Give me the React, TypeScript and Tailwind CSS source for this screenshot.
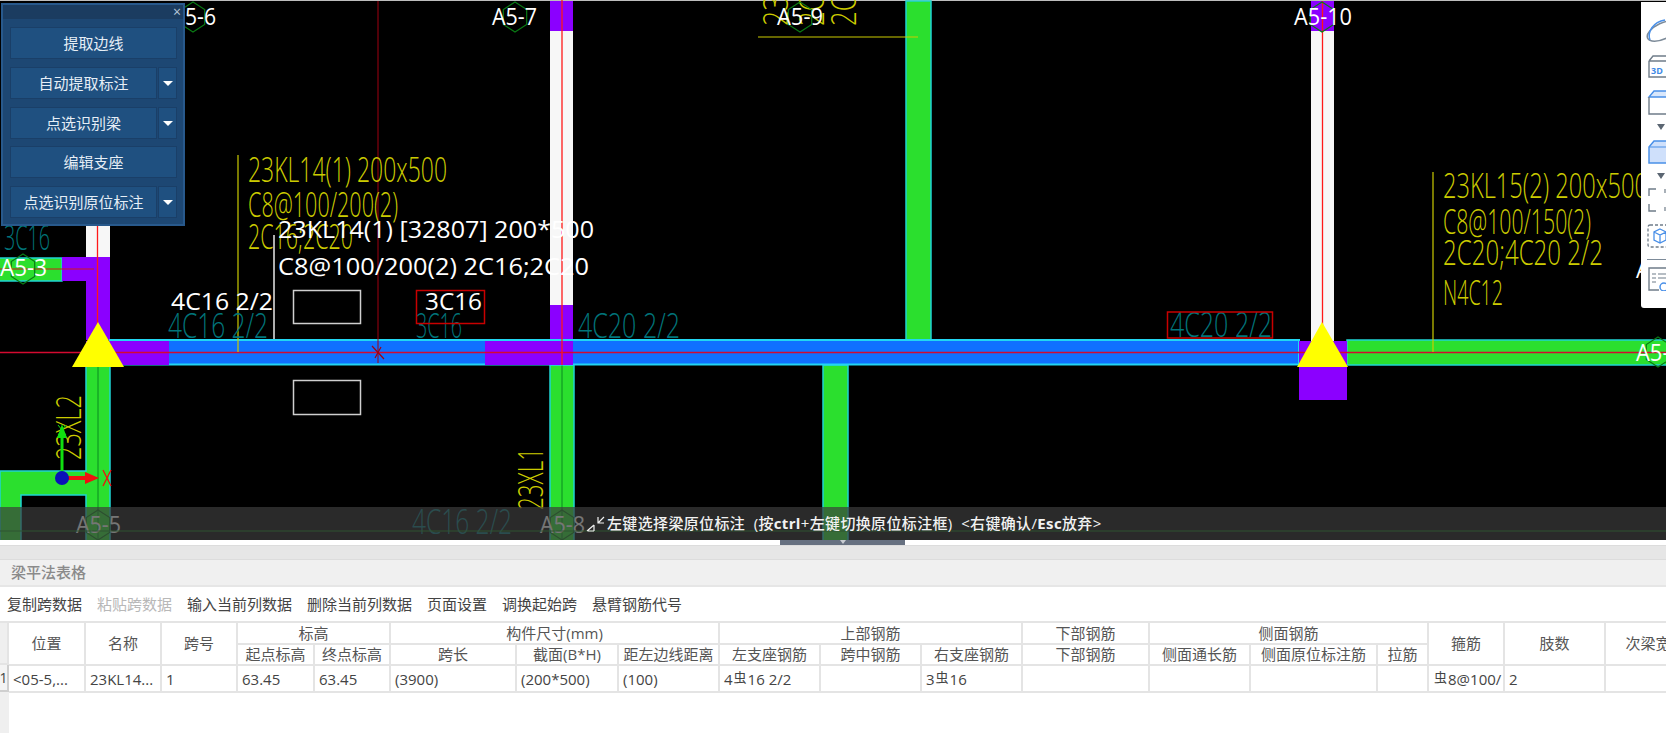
import type { ReactNode } from "react";

const YELLOW = "#cccc00";
const TEAL = "#00747a";
const GREEN = "#2bdf2e";
const CYAN = "#1fd3d3";
const BLUE = "#1070ff";
const PURPLE = "#8b00ff";
const COLUMN_WHITE = "#f7f7f7";
const CAD_FONT = "'Open Sans', sans-serif";

function CadText({ x, y, w, size = 34, color = YELLOW, rotate = false, weight = 300, children }: {
  x: number; y: number; w: number; size?: number; color?: string; rotate?: boolean; weight?: number; children: string;
}) {
  return (
    <text
      x={x}
      y={y}
      fontSize={size}
      fontWeight={weight}
      fontFamily={CAD_FONT}
      fill={color}
      textLength={w}
      lengthAdjust="spacingAndGlyphs"
      transform={rotate ? `rotate(-90 ${x} ${y})` : undefined}
    >
      {children}
    </text>
  );
}

function Hex({ cx, cy }: { cx: number; cy: number }) {
  const r = 15;
  const pts = [0, 60, 120, 180, 240, 300]
    .map((a) => {
      const t = (a * Math.PI) / 180;
      return `${cx + r * 0.9 * Math.sin(t)},${cy - r * Math.cos(t)}`;
    })
    .join(" ");
  return <polygon points={pts} fill="none" stroke="#0a7a14" strokeWidth="1.2" />;
}

function Member({ x, y, w, h, fill = GREEN, edge = CYAN }: { x: number; y: number; w: number; h: number; fill?: string; edge?: string }) {
  return <rect x={x} y={y} width={w} height={h} fill={fill} stroke={edge} strokeWidth="1.5" />;
}

function Block({ x, y, w, h, fill }: { x: number; y: number; w: number; h: number; fill: string }) {
  return <rect x={x} y={y} width={w} height={h} fill={fill} />;
}

function Label({ x, y, w, children }: { x: number; y: number; w: number; children: string }) {
  return <CadText x={x} y={y} w={w} size={23} color="#ffffff" weight={400}>{children}</CadText>;
}

function Drawing() {
  return (
    <svg className="absolute inset-0" width="1666" height="540" viewBox="0 0 1666 540">
      <line x1="0" y1="0.5" x2="1666" y2="0.5" stroke="#bdbdbd" />

      {/* green members */}
      <path d="M0 471H86V365H110V541H86V495H21V541H0Z" fill={GREEN} stroke={CYAN} strokeWidth="1.5" />
      <Member x={-2} y={258} w={64} h={23} />
      <Member x={550} y={365} w={24} h={176} />
      <Member x={823} y={365} w={25} h={176} />
      <Member x={906} y={1} w={25} h={339} />
      <Member x={1347} y={340} w={320} h={25} />
      <line x1="98" y1="365" x2="98" y2="540" stroke="#0a8a20" />
      <line x1="562" y1="365" x2="562" y2="540" stroke="#0a8a20" />

      {/* columns */}
      <Block x={86} y={226} w={24} h={32} fill={COLUMN_WHITE} />
      <Block x={550} y={31} w={23} h={275} fill={COLUMN_WHITE} />
      <Block x={1311} y={31} w={23} h={310} fill={COLUMN_WHITE} />
      <Block x={550} y={1} w={23} h={30} fill={PURPLE} />
      <Block x={1311} y={1} w={23} h={30} fill={PURPLE} />
      <path d="M62 257H110V340H86V281H62Z" fill={PURPLE} />
      <Block x={550} y={305} w={23} h={36} fill={PURPLE} />

      {/* beam */}
      <rect x={110} y={340} width={1189} height={24.5} fill={BLUE} stroke="#22d6f2" strokeWidth="2" />
      <Block x={86} y={341} w={83} h={24} fill={PURPLE} />
      <Block x={485} y={341} w={88} h={24} fill={PURPLE} />
      <Block x={1299} y={341} w={48} h={59} fill={PURPLE} />

      {/* axis and leader lines */}
      <line x1="0" y1="352.5" x2="1666" y2="352.5" stroke="#d40a30" strokeWidth="1.5" />
      <line x1="0" y1="269" x2="94" y2="269" stroke="#d01818" strokeWidth="1.2" />
      <line x1="97.5" y1="226" x2="97.5" y2="340" stroke="#ff1818" strokeWidth="1.3" />
      <line x1="562" y1="0" x2="562" y2="365" stroke="#ff1818" strokeWidth="1.3" />
      <line x1="1322.5" y1="1" x2="1322.5" y2="330" stroke="#ff1818" strokeWidth="1.3" />
      <line x1="378" y1="1" x2="378" y2="363" stroke="#a00010" />
      <path d="M372 346L384 359M375 358L381 347" stroke="#a00010" strokeWidth="1.2" />
      <line x1="238" y1="155" x2="238" y2="352" stroke={YELLOW} strokeWidth="1.2" />
      <line x1="1433" y1="172" x2="1433" y2="352" stroke={YELLOW} strokeWidth="1.2" />
      <line x1="758" y1="37" x2="918" y2="37" stroke={YELLOW} strokeWidth="1.2" />
      <line x1="274" y1="235" x2="274" y2="339" stroke="#e8e8e8" strokeWidth="1.5" />

      {/* supports */}
      <polygon points="98,322 124,367 72,367" fill="#ffff00" />
      <polygon points="1322,322 1348,367 1297,367" fill="#ffff00" />

      {/* beam text in yellow */}
      <CadText x={248} y={182} w={199}>23KL14(1)  200x500</CadText>
      <CadText x={248} y={217} w={150}>C8@100/200(2)</CadText>
      <CadText x={248} y={249} w={105}>2C16;2C20</CadText>
      <CadText x={1443} y={198} w={205}>23KL15(2)  200x500</CadText>
      <CadText x={1443} y={234} w={148}>C8@100/150(2)</CadText>
      <CadText x={1443} y={265} w={160}>2C20;4C20 2/2</CadText>
      <CadText x={1443} y={305} w={60}>N4C12</CadText>
      <CadText x={81} y={460} w={65} rotate>23XL2</CadText>
      <CadText x={543} y={510} w={62} rotate>23XL1</CadText>
      <CadText x={788} y={26} w={60} rotate>23KL</CadText>
      <CadText x={824} y={26} w={60} rotate>2C16</CadText>
      <CadText x={856} y={26} w={60} rotate>2C20</CadText>

      {/* rebar marks in teal */}
      <CadText x={4} y={250} w={46} color={TEAL}>3C16</CadText>
      <CadText x={168} y={338} w={100} color={TEAL}>4C16 2/2</CadText>
      <CadText x={416} y={338} w={46} color={TEAL}>3C16</CadText>
      <CadText x={578} y={338} w={102} color={TEAL}>4C20 2/2</CadText>
      <CadText x={1170} y={337} w={102} color={TEAL}>4C20 2/2</CadText>
      <CadText x={412} y={534} w={100} color={TEAL}>4C16 2/2</CadText>

      {/* picked rectangles */}
      <rect x={293.5} y={290.5} width={67} height={33} fill="none" stroke="#cfcfcf" strokeWidth="1.5" />
      <rect x={293.5} y={380.5} width={67} height={34} fill="none" stroke="#cfcfcf" strokeWidth="1.5" />
      <rect x={416.5} y={290.5} width={68} height={33} fill="none" stroke="#c80000" strokeWidth="1.5" />
      <rect x={1167.5} y={312} width={105} height={26} fill="none" stroke="#c80000" strokeWidth="1.5" />

      {/* axis marks */}
      <Hex cx={23} cy={269} />
      <Hex cx={193} cy={17} />
      <Hex cx={515} cy={17} />
      <Hex cx={800} cy={17} />
      <Hex cx={1322} cy={17} />
      <Hex cx={1658} cy={352} />
      <Hex cx={98} cy={525} />
      <Hex cx={562} cy={525} />
      <Label x={0} y={276} w={47}>A5-3</Label>
      <Label x={185} y={25} w={31}>5-6</Label>
      <Label x={492} y={25} w={45}>A5-7</Label>
      <Label x={777} y={25} w={46}>A5-9</Label>
      <Label x={1294} y={25} w={58}>A5-10</Label>
      <Label x={1636} y={361} w={46}>A5-1</Label>
      <Label x={1636} y={278} w={46}>A5-2</Label>
      <Label x={76} y={533} w={45}>A5-5</Label>
      <Label x={540} y={533} w={45}>A5-8</Label>
      <line x1="0" y1="531" x2="1666" y2="531" stroke="#0f8a1a" />

      {/* hovered beam tip */}
      <Label x={278} y={238} w={316}>23KL14(1) [32807] 200*500</Label>
      <Label x={278} y={275} w={311}>C8@100/200(2) 2C16;2C20</Label>
      <Label x={171} y={310} w={102}>4C16 2/2</Label>
      <Label x={425} y={310} w={57}>3C16</Label>

      {/* coordinate mark */}
      <path d="M62 478V436" stroke="#10e010" strokeWidth="3" />
      <polygon points="62,424 57,438 67,438" fill="#10e010" />
      <path d="M58 425L66 435M66 425L58 435" stroke="#10e010" strokeWidth="1" />
      <path d="M62 478H86" stroke="#f01010" strokeWidth="4" />
      <polygon points="99,478 85,472 85,484" fill="#f01010" />
      <path d="M103 470L111 486M111 470L103 486" stroke="#f01010" strokeWidth="1.3" />
      <circle cx="62" cy="478" r="7" fill="#0a10b8" />
    </svg>
  );
}

function PanelButton({ label, split = false, className = "" }: { label: string; split?: boolean; className?: string }) {
  return (
    <div className={`flex h-[32px] gap-px ${className}`}>
      <div className="flex flex-1 items-center justify-center border border-[#1a3f68] bg-[#1f5080] text-[15px] text-[#e6eef6]">
        {label}
      </div>
      {split && (
        <div className="flex w-[19px] items-center justify-center border border-[#1a3f68] bg-[#1f5080]">
          <div className="h-0 w-0 border-x-[5px] border-t-[5px] border-x-transparent border-t-white" />
        </div>
      )}
    </div>
  );
}

function FloatPanel() {
  return (
    <div className="absolute left-[1px] top-[3px] flex h-[223px] w-[184px] flex-col border-2 border-[#28598c] bg-[#1d4773]">
      <div className="flex h-[14px] shrink-0 items-center justify-end bg-[#1b3c60] pr-[2px] text-[14px] leading-none text-[#b8c8d8]">×</div>
      <div className="flex flex-col gap-[8px] pl-[7px] pr-[6px] pt-[8px]">
        <PanelButton label="提取边线" />
        <PanelButton label="自动提取标注" split />
        <PanelButton label="点选识别梁" split />
        <PanelButton label="编辑支座" className="-mt-px" />
        <PanelButton label="点选识别原位标注" split />
      </div>
    </div>
  );
}

function Icon({ h, className = "", children }: { h: number; className?: string; children: ReactNode }) {
  return (
    <svg width="25" height={h} viewBox={`0 0 25 ${h}`} className={`shrink-0 ${className}`} fill="none">
      {children}
    </svg>
  );
}

function Drop({ className }: { className: string }) {
  return <div className={`ml-[16px] h-0 w-0 shrink-0 border-x-[4px] border-t-[6px] border-x-transparent border-t-[#5b6672] ${className}`} />;
}

function SideToolbar() {
  return (
    <div className="absolute right-0 top-[2px] flex h-[306px] w-[25px] flex-col overflow-hidden rounded-bl-[3px] bg-white pt-[16px]">
      <Icon h={27}>
        <ellipse cx="22" cy="13" rx="17" ry="8" transform="rotate(-25 22 13)" stroke="#7d8b99" strokeWidth="1.5" />
        <path d="M9 22C6 14 12 4 24 2" stroke="#4a90e8" strokeWidth="1.5" />
      </Icon>
      <Icon h={23} className="mt-[10px]">
        <path d="M8 6L12 1H26M8 6H26M8 6V22H26" stroke="#6f7c89" strokeWidth="1.4" />
        <text x="10" y="19" fontSize="9" fontWeight="700" fontFamily={CAD_FONT} fill="#3f8ae6">3D</text>
      </Icon>
      <Icon h={25} className="mt-[12px]">
        <path d="M8 7L13 1H26V7Z" fill="#d9e7fb" stroke="#4a90e8" strokeWidth="1.4" />
        <path d="M8 7V24H26" stroke="#6f7c89" strokeWidth="1.4" />
      </Icon>
      <Drop className="mt-[9px]" />
      <Icon h={24} className="mt-[10px]">
        <path d="M8 7L13 1H26V23H8Z" fill="#cfe0fb" stroke="#4a90e8" strokeWidth="1.5" />
        <path d="M8 7H26" stroke="#4a90e8" strokeWidth="1.2" />
      </Icon>
      <Drop className="mt-[9px]" />
      <Icon h={24} className="mt-[9px]">
        <path d="M15 1H8V8M8 16V23H15" stroke="#6f7c89" strokeWidth="1.4" />
        <path d="M24 1V5M24 19V23" stroke="#6f7c89" strokeWidth="1.2" />
      </Icon>
      <Icon h={24} className="mt-[12px]">
        <rect x="7" y="1" width="24" height="22" rx="2" stroke="#6f7c89" strokeWidth="1.3" strokeDasharray="3 2" />
        <path d="M19 5L25 8V16L19 19L13 16V8ZM13 8L19 11L25 8M19 11V19" stroke="#4a90e8" strokeWidth="1.3" />
      </Icon>
      <div className="ml-[6px] mt-[11px] h-px w-[19px] shrink-0 bg-[#7d8b99]" />
      <Icon h={24} className="mt-[7px]">
        <path d="M26 1H8V23H18" stroke="#6f7c89" strokeWidth="1.4" />
        <path d="M11 7H15M17 7H25M11 11H15M17 11H25M11 15H15" stroke="#6f7c89" strokeWidth="1.2" />
        <circle cx="23" cy="20" r="4" stroke="#4a90e8" strokeWidth="1.5" />
      </Icon>
    </div>
  );
}

function StatusBar() {
  return (
    <div className="absolute left-0 right-0 top-[507px] flex h-[33px] items-center bg-[rgba(60,60,60,0.7)] pl-[585px] text-[15px] font-medium tracking-[0.35px] text-[#f2f2f2]">
      <svg width="20" height="18" viewBox="0 0 20 18" fill="none" className="mr-[2px] shrink-0">
        <path d="M13 8L19 2M13 2V8H19" stroke="#f0f0f0" strokeWidth="1.2" />
        <path d="M2 16L9 10M9 10V16M9 16H3" stroke="#f0f0f0" strokeWidth="1.2" />
      </svg>
      <span className="whitespace-pre">
        左键选择梁原位标注  (按<b className="font-bold">ctrl</b>+左键切换原位标注框)  &lt;右键确认/<b className="font-bold">Esc</b>放弃&gt;
      </span>
    </div>
  );
}

const TOOL_ITEMS = [
  { label: "复制跨数据" },
  { label: "粘贴跨数据", disabled: true },
  { label: "输入当前列数据" },
  { label: "删除当前列数据" },
  { label: "页面设置" },
  { label: "调换起始跨" },
  { label: "悬臂钢筋代号" },
];

const COL_WIDTHS = [76, 76, 76, 77, 76, 126, 102, 101, 101, 101, 101, 127, 101, 127, 51, 76, 101, 101];

function Rebar() {
  return <span className="relative -top-[3px] mx-px text-[13px]">虫</span>;
}

const cell = "border-b-2 border-r-2 border-[#e4e4e4] overflow-hidden whitespace-nowrap p-0";
const head = `${cell} text-center font-normal text-[#555]`;
const data = `${cell} pl-[4px] pt-[2px] text-left text-[#444]`;

function BeamTable() {
  return (
    <div className="flex flex-1 items-start overflow-hidden">
      <div className="flex w-[9px] shrink-0 flex-col self-stretch bg-[#efefef]">
        <div className="h-[42px] border-b-2 border-r-2 border-[#e4e4e4]" />
        <div className="flex h-[27px] items-center justify-center border-b-2 border-r-2 border-[#cfcfcf] bg-[#f4f4f4] text-[14px] text-[#444]">1</div>
      </div>
      <table className="w-[1697px] shrink-0 table-fixed border-collapse text-[15px] leading-none">
        <colgroup>
          {COL_WIDTHS.map((w, i) => (
            <col key={i} style={{ width: w }} />
          ))}
        </colgroup>
        <thead>
          <tr className="h-[21px]">
            <th rowSpan={2} className={head}>位置</th>
            <th rowSpan={2} className={head}>名称</th>
            <th rowSpan={2} className={head}>跨号</th>
            <th colSpan={2} className={head}>标高</th>
            <th colSpan={3} className={head}>构件尺寸(mm)</th>
            <th colSpan={3} className={head}>上部钢筋</th>
            <th className={head}>下部钢筋</th>
            <th colSpan={3} className={head}>侧面钢筋</th>
            <th rowSpan={2} className={head}>箍筋</th>
            <th rowSpan={2} className={head}>肢数</th>
            <th rowSpan={2} className={head}>次梁宽度</th>
          </tr>
          <tr className="h-[21px]">
            <th className={head}>起点标高</th>
            <th className={head}>终点标高</th>
            <th className={head}>跨长</th>
            <th className={head}>截面(B*H)</th>
            <th className={head}>距左边线距离</th>
            <th className={head}>左支座钢筋</th>
            <th className={head}>跨中钢筋</th>
            <th className={head}>右支座钢筋</th>
            <th className={head}>下部钢筋</th>
            <th className={head}>侧面通长筋</th>
            <th className={head}>侧面原位标注筋</th>
            <th className={head}>拉筋</th>
          </tr>
        </thead>
        <tbody>
          <tr className="h-[27px]">
            <td className={data}>&lt;05-5,...</td>
            <td className={data}>23KL14...</td>
            <td className={data}>1</td>
            <td className={data}>63.45</td>
            <td className={data}>63.45</td>
            <td className={data}>(3900)</td>
            <td className={data}>(200*500)</td>
            <td className={data}>(100)</td>
            <td className={data}>4<Rebar />16 2/2</td>
            <td className={data} />
            <td className={data}>3<Rebar />16</td>
            <td className={data} />
            <td className={data} />
            <td className={data} />
            <td className={data} />
            <td className={data}><Rebar />8@100/</td>
            <td className={data}>2</td>
            <td className={data} />
          </tr>
        </tbody>
      </table>
    </div>
  );
}

function BottomPanel() {
  return (
    <div className="relative flex flex-1 flex-col overflow-hidden bg-white pt-[5px]">
      <div className="absolute left-[780px] top-0 flex h-[5px] w-[125px] justify-center bg-[#667080]">
        <div className="h-0 w-0 border-x-[3px] border-t-[4px] border-x-transparent border-t-[#c8ccd2]" />
      </div>
      <div className="h-[15px] shrink-0 border-y border-[#dcdcdc] bg-[#e6e6e6]" />
      <div className="flex h-[27px] shrink-0 items-center border-b-2 border-[#e6e6e6] bg-[#f0f0f0] pl-[11px] text-[15px] font-medium text-[#8a8a8a]">
        梁平法表格
      </div>
      <div className="flex h-[36px] shrink-0 items-center gap-[15px] border-b-2 border-[#e4e4e4] pl-[7px] text-[15px] text-[#444]">
        {TOOL_ITEMS.map((item) => (
          <span key={item.label} className={item.disabled ? "text-[#b8b8b8]" : ""}>
            {item.label}
          </span>
        ))}
      </div>
      <BeamTable />
    </div>
  );
}

export default function App() {
  return (
    <div className="flex h-[733px] w-[1666px] flex-col overflow-hidden bg-white font-['Open_Sans','Noto_Sans_CJK_SC',sans-serif]">
      <div className="relative h-[540px] shrink-0 overflow-hidden bg-black">
        <Drawing />
        <FloatPanel />
        <SideToolbar />
        <StatusBar />
      </div>
      <BottomPanel />
    </div>
  );
}
